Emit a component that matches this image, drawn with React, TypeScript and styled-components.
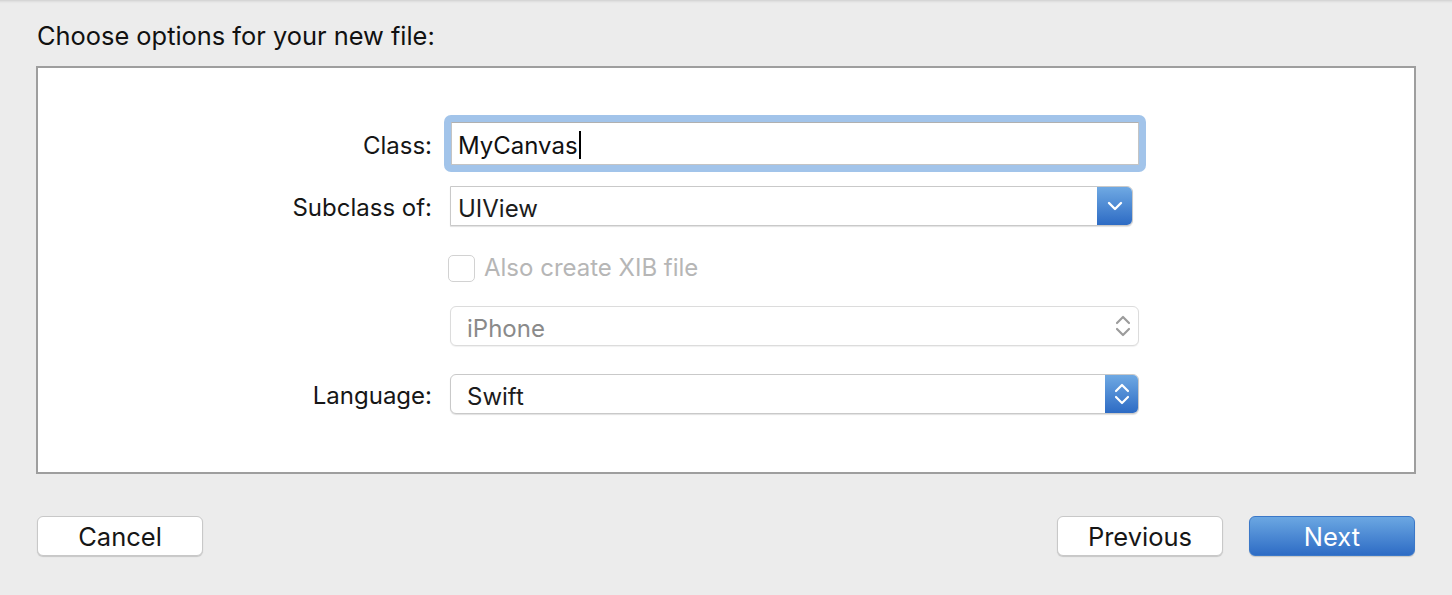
import React from 'react';
import styled, { createGlobalStyle } from 'styled-components';

const GlobalStyle = createGlobalStyle`
  html, body {
    margin: 0;
    padding: 0;
  }
  body {
    background: #ececec;
    font-family: Inter, "Liberation Sans", Arial, sans-serif;
    -webkit-font-smoothing: antialiased;
  }
`

const Window = styled.div`
  width: 1452px;
  height: 595px;
  box-sizing: border-box;
  padding: 0 37px 0 36px;
  background: #ececec;
  box-shadow: inset 0 4px 3px -3px rgba(0, 0, 0, 0.14);
  display: flex;
  flex-direction: column;
`

const Title = styled.div`
  height: 66px;
  box-sizing: border-box;
  padding: 22px 0 0 1px;
  font-size: 25.4px;
  line-height: 28px;
  color: #111;
`

const Panel = styled.div`
  height: 408px;
  margin-right: -1px;
  box-sizing: border-box;
  border: 2px solid #9e9e9e;
  background: #ffffff;
  padding-top: 47px;
  display: flex;
  flex-direction: column;
`

interface RowProps {
  $gap: number;
  $height: number;
}

const Row = styled.div<RowProps>`
  display: grid;
  grid-template-columns: 394px 1fr;
  column-gap: 18px;
  align-items: center;
  margin-top: ${props => props.$gap}px;
  height: ${props => props.$height}px;
`

const Label = styled.div`
  text-align: right;
  font-size: 24px;
  padding-top: 3px;
  color: #161616;
`

const FocusRing = styled.div`
  width: 688px;
  margin-left: -6px;
  padding: 7px;
  border-radius: 7px;
  background: #a2c4ea;
`

const TextBox = styled.div`
  height: 43px;
  box-sizing: border-box;
  border: 1px solid #c4c4c4;
  border-top-color: #b0b0b0;
  background: #ffffff;
  padding: 3px 0 0 6px;
  display: flex;
  align-items: center;
  font-size: 24px;
  color: #111;
`

const Caret = styled.span`
  display: inline-block;
  width: 2px;
  height: 28px;
  margin-left: 1px;
  background: #000;
`

interface PopupProps {
  $width: number;
  $pulldown?: boolean;
  $disabled?: boolean;
}

const Popup = styled.div<PopupProps>`
  width: ${props => props.$width}px;
  height: 40px;
  box-sizing: border-box;
  display: flex;
  align-items: stretch;
  background: #ffffff;
  border: 1px solid ${props => (props.$disabled ? '#dcdcdc' : '#c9c9c9')};
  border-radius: ${props => (props.$pulldown ? '0 6px 6px 0' : '6px')};
  box-shadow: 0 1px 1px rgba(0, 0, 0, ${props => (props.$disabled ? 0.06 : 0.12)});
  overflow: hidden;
`

const PopupValue = styled.div<{ $disabled?: boolean; $inset?: number }>`
  flex: 1;
  display: flex;
  align-items: center;
  padding: 4px 0 0 ${props => props.$inset ?? 16}px;
  font-size: 24px;
  color: ${props => (props.$disabled ? '#8a8a8a' : '#1c1c1c')};
`

const PopupArrow = styled.div<{ $width: number; $plain?: boolean }>`
  width: ${props => props.$width}px;
  display: flex;
  align-items: center;
  justify-content: center;
  background: ${props =>
    props.$plain ? 'transparent' : 'linear-gradient(#6fa9e3, #2d6bc4)'};
`

const CheckRow = styled.div`
  display: flex;
  align-items: center;
  margin-left: -2px;
`

const CheckBox = styled.div`
  width: 27px;
  height: 27px;
  box-sizing: border-box;
  border: 1px solid #d2d2d2;
  border-radius: 5px;
  background: #fff;
`

const CheckLabel = styled.span`
  margin: -2px 0 0 9px;
  font-size: 24px;
  color: #b6b6b6;
`

const Footer = styled.div`
  display: flex;
  justify-content: space-between;
  margin-top: 42px;
  padding-left: 1px;
`

const ButtonGroup = styled.div`
  display: flex;
  grid-gap: 26px;
`

const Button = styled.button<{ $primary?: boolean }>`
  width: 166px;
  height: 40px;
  box-sizing: border-box;
  border-radius: 6px;
  font-family: inherit;
  font-size: 25.5px;
  padding: 1px 0 0;
  cursor: default;
  color: ${props => (props.$primary ? '#ffffff' : '#161616')};
  background: ${props =>
    props.$primary ? 'linear-gradient(#6ba7e2, #2e6cc5)' : '#ffffff'};
  border: 1px solid ${props => (props.$primary ? '#3b78c8' : '#c8c8c8')};
  box-shadow: 0 1px 1px rgba(0, 0, 0, 0.16);
`

const ChevronDown = () => (
  <svg width="16" height="10" viewBox="0 0 16 10">
    <polyline points="2,2 8,8 14,2" fill="none" stroke="#fff" strokeWidth="2.4" strokeLinecap="round" strokeLinejoin="round" />
  </svg>
)

const UpDown = ({ color }: { color: string }) => (
  <svg width="16" height="24" viewBox="0 0 16 24">
    <polyline points="2,9 8,3 14,9" fill="none" stroke={color} strokeWidth="2.2" strokeLinecap="round" strokeLinejoin="round" />
    <polyline points="2,15 8,21 14,15" fill="none" stroke={color} strokeWidth="2.2" strokeLinecap="round" strokeLinejoin="round" />
  </svg>
)

const App: React.FC = () => {
  return (
    <Window>
      <GlobalStyle />
      <Title>Choose options for your new file:</Title>
      <Panel>
        <Row $gap={0} $height={57}>
          <Label>Class:</Label>
          <FocusRing>
            <TextBox>
              MyCanvas<Caret />
            </TextBox>
          </FocusRing>
        </Row>
        <Row $gap={14} $height={40}>
          <Label>Subclass of:</Label>
          <Popup $width={683} $pulldown>
            <PopupValue $inset={7}>UIView</PopupValue>
            <PopupArrow $width={35}>
              <ChevronDown />
            </PopupArrow>
          </Popup>
        </Row>
        <Row $gap={28} $height={28}>
          <div />
          <CheckRow>
            <CheckBox />
            <CheckLabel>Also create XIB file</CheckLabel>
          </CheckRow>
        </Row>
        <Row $gap={24} $height={40}>
          <div />
          <Popup $width={689} $disabled>
            <PopupValue $disabled>iPhone</PopupValue>
            <PopupArrow $width={31} $plain>
              <UpDown color="#9c9c9c" />
            </PopupArrow>
          </Popup>
        </Row>
        <Row $gap={28} $height={40}>
          <Label>Language:</Label>
          <Popup $width={689}>
            <PopupValue>Swift</PopupValue>
            <PopupArrow $width={33}>
              <UpDown color="#fff" />
            </PopupArrow>
          </Popup>
        </Row>
      </Panel>
      <Footer>
        <Button>Cancel</Button>
        <ButtonGroup>
          <Button>Previous</Button>
          <Button $primary>Next</Button>
        </ButtonGroup>
      </Footer>
    </Window>
  )
}

export default App;
